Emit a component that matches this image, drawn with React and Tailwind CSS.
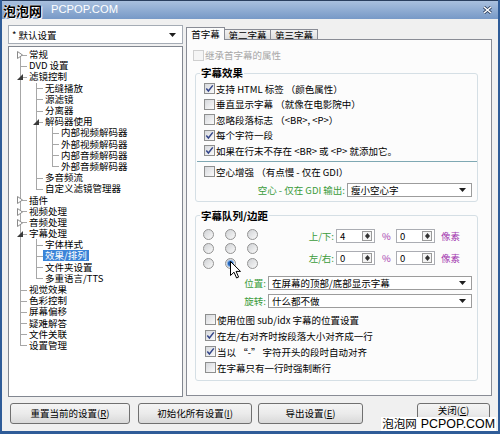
import React from "react";

// tree rows: l = depth, icon = closed/open, sel = highlighted
const treeRows = [
  { l: 0, t: "常规", icon: "closed" },
  { l: 0, t: "DVD 设置" },
  { l: 0, t: "滤镜控制", icon: "open" },
  { l: 1, t: "无缝播放" },
  { l: 1, t: "源滤镜" },
  { l: 1, t: "分离器" },
  { l: 1, t: "解码器使用", icon: "open" },
  { l: 2, t: "内部视频解码器" },
  { l: 2, t: "外部视频解码器" },
  { l: 2, t: "内部音频解码器" },
  { l: 2, t: "外部音频解码器" },
  { l: 1, t: "多音频流" },
  { l: 1, t: "自定义滤镜管理器" },
  { l: 0, t: "插件", icon: "closed" },
  { l: 0, t: "视频处理", icon: "closed" },
  { l: 0, t: "音频处理", icon: "closed" },
  { l: 0, t: "字幕处理", icon: "open" },
  { l: 1, t: "字体样式" },
  { l: 1, t: "效果/排列", sel: true },
  { l: 1, t: "文件夹设置" },
  { l: 1, t: "多重语言/TTS" },
  { l: 0, t: "视觉效果" },
  { l: 0, t: "色彩控制" },
  { l: 0, t: "屏幕偏移" },
  { l: 0, t: "疑难解答" },
  { l: 0, t: "文件关联" },
  { l: 0, t: "设置管理" },
];

// is there a later sibling at this depth before the branch closes?
const moreAt = (i, lvl) => {
  for (let j = i + 1; j < treeRows.length; j++) {
    if (treeRows[j].l < lvl) return false;
    if (treeRows[j].l === lvl) return true;
  }
  return false;
};

const TreeRow = ({ r, i }) => (
  <div className="flex h-[11.2px] items-center">
    {Array.from({ length: r.l + 1 }).map((_, a) => {
      const self = a === r.l;
      const cont = moreAt(i, a);
      return (
        <div key={a} className="relative w-4 h-full shrink-0">
          {!self && cont && <span className="absolute left-[8px] top-0 bottom-0 w-px bg-[#a7a7a7]" />}
          {self && i > 0 && <span className="absolute left-[8px] top-0 h-1/2 w-px bg-[#a7a7a7]" />}
          {self && cont && <span className="absolute left-[8px] top-1/2 bottom-0 w-px bg-[#a7a7a7]" />}
          {self && <span className="absolute left-[8px] top-1/2 w-[7px] h-px bg-[#a7a7a7]" />}
          {self && r.icon === "closed" && (
            <svg className="absolute left-[5px] top-[2px]" width="6" height="8" viewBox="0 0 6 8">
              <path d="M0.5 0.5 L5.5 4 L0.5 7.5 Z" fill="#fff" stroke="#8a8a8a" />
            </svg>
          )}
          {self && r.icon === "open" && (
            <svg className="absolute left-[5px] top-[3px]" width="6" height="6" viewBox="0 0 6 6">
              <path d="M6 0 L6 6 L0 6 Z" fill="#3a3a3a" />
            </svg>
          )}
        </div>
      );
    })}
    <span
      className={`ml-[-1px] pl-[2px] pr-[2px] leading-[11px] whitespace-nowrap ${
        r.sel ? "bg-[#3b84d8] text-white" : "text-black"
      }`}
    >
      {r.t}
    </span>
  </div>
);

const Check = ({ on, dis }) => (
  <span
    className={`w-[11px] h-[11px] shrink-0 border flex items-center justify-center ${
      dis ? "border-[#cfcfcf] bg-[#f5f5f5]" : "border-[#8e8f8f] bg-linear-to-br from-[#d6d8dc] to-[#fbfbfb]"
    }`}
  >
    {on && (
      <svg width="9" height="9" viewBox="0 0 9 9">
        <path d="M1.3 4.6 L3.4 7 L7.8 1.4" stroke="#34468a" strokeWidth="1.5" fill="none" />
      </svg>
    )}
  </span>
);

const CheckRow = ({ on, dis, h = "h-[15.5px]", children }) => (
  <div className={`flex items-center gap-[1px] ${h}`}>
    <Check on={on} dis={dis} />
    <span className={`whitespace-nowrap leading-[12px] ${dis ? "text-[#a8a8a8]" : "text-black"}`}>{children}</span>
  </div>
);

const Radio = ({ on }) => (
  <span className="w-[11px] h-[11px] rounded-full border border-[#939393] bg-linear-to-br from-[#cfd1d4] to-[#fafafa] flex items-center justify-center">
    {on && <span className="w-[5px] h-[5px] rounded-full bg-[#2160b4] ring-1 ring-[#7fb0e8]" />}
  </span>
);

const Arrow = () => (
  <svg width="7" height="4" viewBox="0 0 7 4" className="shrink-0">
    <path d="M0 0 H7 L3.5 4 Z" fill="#1e1e1e" />
  </svg>
);

const Combo = ({ text, className }) => (
  <div className={`h-[14px] bg-white border border-[#9c9c9c] flex items-center pl-[3px] pr-[5px] ${className}`}>
    <span className="flex-1 whitespace-nowrap leading-[12px]">{text}</span>
    <Arrow />
  </div>
);

const Spin = ({ v }) => (
  <div className="w-[39px] h-[14px] bg-white border border-[#abadb3] flex items-center">
    <span className="flex-1 pl-[3px] leading-[12px]">{v}</span>
    <div className="w-[10px] h-[10px] mr-[2px] border border-[#9a9a9a] flex flex-col items-center justify-between py-[1px] bg-[#f4f4f4]">
      <svg width="5" height="3" viewBox="0 0 5 3"><path d="M0 3 L2.5 0 L5 3 Z" fill="#333" /></svg>
      <svg width="5" height="3" viewBox="0 0 5 3"><path d="M0 0 L5 0 L2.5 3 Z" fill="#333" /></svg>
    </div>
  </div>
);

const Btn = ({ className, children }) => (
  <div
    className={`h-[21px] rounded-[3px] border border-[#707070] bg-linear-to-b from-[#f4f4f4] via-[#ebebeb] to-[#d9d9d9] flex items-center justify-center whitespace-nowrap ${className}`}
  >
    {children}
  </div>
);

export default function App() {
  return (
    <div className="w-[500px] h-[434px] relative overflow-hidden flex flex-col bg-[#f0f0f0] border-l-2 border-r-2 border-b-[3px] border-[#2f5c98] text-[9.5px] text-black font-['Noto_Sans_CJK_SC','Noto_Sans',sans-serif]">
      {/* TITLE BAR */}
      <div className="h-[19px] shrink-0 -mx-[2px] bg-linear-to-b from-[#a9c0de] to-[#7799c7] border-t border-[#2a3f5f] flex items-center pl-[3px] pr-[8px]">
        <span className="text-[13px] font-bold text-black leading-none [text-shadow:0_0_2px_#fff,0_0_1px_#fff,1px_1px_0_#fff]">泡泡网</span>
        <span className="ml-[9px] text-[11.2px] text-white leading-none font-['Liberation_Sans',sans-serif]">PCPOP.COM</span>
        <div className="flex-1" />
        <svg width="9" height="8" viewBox="0 0 9 8">
          <path d="M1 1 L8 7 M8 1 L1 7" stroke="#2b3d5c" strokeWidth="3" />
          <path d="M1 1 L8 7 M8 1 L1 7" stroke="#fff" strokeWidth="1.6" />
        </svg>
      </div>

      {/* BODY */}
      <div className="flex-1 flex flex-col pl-[6px] pt-[6px]">
        <div className="flex h-[372px] gap-[3px]">
          {/* LEFT: profile + tree */}
          <div className="w-[175px] flex flex-col">
            <div className="h-[19px] bg-white border border-[#a5acb5] flex items-center pl-[3px] pr-[6px]">
              <span className="flex-1 leading-[12px]">* 默认设置</span>
              <Arrow />
            </div>
            <div className="mt-[2px] h-[351px] bg-white border border-[#828790] pt-[2px] pl-[3px]">
              {treeRows.map((r, i) => (
                <TreeRow key={i} r={r} i={i} />
              ))}
            </div>
          </div>

          {/* RIGHT: tabs + panel */}
          <div className="w-[306px] flex flex-col">
            <div className="h-[14px] flex items-end">
              <div className="relative z-10 -mb-px w-[39px] h-[13px] bg-[#fcfcfc] border border-b-0 border-[#898c95] flex items-center justify-center leading-[11px]">
                首字幕
              </div>
              <div className="w-[46px] h-[10px] bg-linear-to-b from-[#f2f2f2] to-[#dedede] border border-b-0 border-l-0 border-[#898c95] flex items-center justify-center leading-[10px]">
                第二字幕
              </div>
              <div className="w-[47px] h-[10px] bg-linear-to-b from-[#f2f2f2] to-[#dedede] border border-b-0 border-l-0 border-[#898c95] flex items-center justify-center leading-[10px]">
                第三字幕
              </div>
            </div>

            <div className="h-[357px] border border-[#898c95] bg-[#fcfcfc] flex flex-col">
              <div className="mt-[9px] pl-[6px]">
                <CheckRow dis h="h-[12px]">继承首字幕的属性</CheckRow>
              </div>

              {/* GROUP: 字幕效果 */}
              <fieldset className="mt-[6px] ml-[8px] w-[283px] border border-[#d5dfe5] rounded-[3px] p-0 m-0">
                <legend className="ml-[4px] px-px font-bold text-[10.5px] leading-[12px]">字幕效果</legend>
                <div className="pl-[8px] pt-[2px] pb-[4px] flex flex-col">
                  <CheckRow on>支持 HTML 标签 （颜色属性）</CheckRow>
                  <CheckRow>垂直显示字幕 （就像在电影院中）</CheckRow>
                  <CheckRow>忽略段落标志 （&lt;BR&gt;, &lt;P&gt;）</CheckRow>
                  <CheckRow on>每个字符一段</CheckRow>
                  <CheckRow on>如果在行末不存在 &lt;BR&gt; 或 &lt;P&gt; 就添加它。</CheckRow>
                  <div className="mt-[2.5px] -ml-[7px] h-px bg-[#7fa8b3]" />
                  <div className="mt-[2px]">
                    <CheckRow>空心增强 （有点慢 - 仅在 GDI）</CheckRow>
                  </div>
                  <div className="mt-[3px] -ml-[8px] flex items-center gap-[2px]">
                    <span className="w-[149px] text-right text-[#3a9b3a] whitespace-nowrap leading-[12px]">空心 - 仅在 GDI 输出:</span>
                    <Combo text="瘦小空心字" className="w-[125px]" />
                  </div>
                </div>
              </fieldset>

              {/* GROUP: 字幕队列/边距 */}
              <fieldset className="mt-[8px] ml-[8px] w-[283px] border border-[#d5dfe5] rounded-[3px] p-0 m-0">
                <legend className="ml-[4px] px-px font-bold text-[10.5px] leading-[12px]">字幕队列/边距</legend>
                <div className="pt-[7px] pb-[4px] flex flex-col">
                  <div className="flex">
                    <div className="pl-[7px] grid grid-cols-3 gap-x-[11px] gap-y-[3.5px]">
                      {[0, 1, 2, 3, 4, 5, 6, 7, 8].map((k) => (
                        <Radio key={k} on={k === 7} />
                      ))}
                    </div>
                    <div className="ml-[38px] flex flex-col gap-[8px]">
                      {[["上/下:", "4"], ["左/右:", "0"]].map(([lab, v]) => (
                        <div key={lab} className="flex items-center h-[14px]">
                          <span className="w-[40px] pr-[2px] text-right text-[#3a9b3a] leading-[12px]">{lab}</span>
                          <Spin v={v} />
                          <span className="w-[21px] pl-[7px] text-[#a43ab0] leading-[12px]">%</span>
                          <Spin v="0" />
                          <span className="ml-[6px] text-[#a43ab0] leading-[12px]">像素</span>
                        </div>
                      ))}
                    </div>
                  </div>
                  <div className="mt-[7px] flex items-center gap-[2px]">
                    <span className="w-[70px] text-right text-[#3a9b3a] leading-[12px]">位置:</span>
                    <Combo text="在屏幕的顶部/底部显示字幕" className="w-[204px]" />
                  </div>
                  <div className="mt-[4px] flex items-center gap-[2px]">
                    <span className="w-[70px] text-right text-[#3a9b3a] leading-[12px]">旋转:</span>
                    <Combo text="什么都不做" className="w-[204px]" />
                  </div>
                  <div className="mt-[4px] pl-[9px] flex flex-col">
                    <CheckRow h="h-[16px]">使用位图 sub/idx 字幕的位置设置</CheckRow>
                    <CheckRow on h="h-[16px]">在左/右对齐时按段落大小对齐成一行</CheckRow>
                    <CheckRow on h="h-[16px]">当以 “-” 字符开头的段时自动对齐</CheckRow>
                    <CheckRow h="h-[16px]">在字幕只有一行时强制断行</CheckRow>
                  </div>
                </div>
              </fieldset>
            </div>
          </div>
        </div>

        {/* BUTTONS */}
        <div className="mt-[6px] ml-[2px] flex">
          <Btn className="w-[120px]">重置当前的设置(<u>R</u>)</Btn>
          <Btn className="ml-[8px] w-[114px]">初始化所有设置(<u>I</u>)</Btn>
          <Btn className="ml-[6px] w-[105px]">导出设置(<u>E</u>)</Btn>
          <Btn className="ml-[54px] w-[73px] items-start pt-[1px] leading-[11px]">关闭(<u>C</u>)</Btn>
        </div>
      </div>

      {/* mouse cursor over the selected radio */}
      <svg className="absolute left-[228px] top-[261px]" width="11" height="18" viewBox="0 0 11 18">
        <path d="M0.5 0.5 L0.5 14.5 L4 11.2 L6.6 17 L8.6 16.1 L6.1 10.4 L10.5 10.4 Z" fill="#fff" stroke="#000" strokeWidth="1" strokeLinejoin="round" />
      </svg>

      {/* watermark */}
      <div className="absolute right-[2px] bottom-0 bg-white px-[1px] h-[14px] flex items-center leading-none text-black">
        <span className="text-[11.5px]">泡泡网</span>
        <span className="ml-[4px] text-[12.4px] font-['Liberation_Sans',sans-serif]">PCPOP.COM</span>
      </div>
    </div>
  );
}
